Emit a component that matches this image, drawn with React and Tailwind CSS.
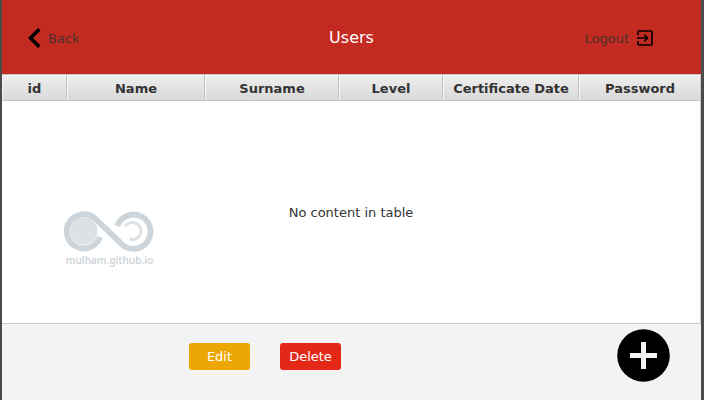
import React from "react";

const columns = [
  { label: "id", width: "w-[65px]" },
  { label: "Name", width: "w-[138px]" },
  { label: "Surname", width: "w-[134px]" },
  { label: "Level", width: "w-[104px]" },
  { label: "Certificate Date", width: "w-[136px]" },
  { label: "Password", width: "w-[122px]" },
];

function Watermark() {
  return (
    <div className="absolute left-[58px] top-[134px] flex w-[100px] flex-col items-center text-[#ced5da]">
      <svg width="100" height="46" viewBox="60 208 100 46" fill="none">
        <circle cx="83.8" cy="231" r="13.8" fill="#dce1e5" />
        <path d="M100 237A17.1 17.1 0 1 1 95.5 218.8L120.4 242.8A17.1 17.1 0 1 0 117.3 226" stroke="#ced5da" strokeWidth="5.8" />
        <path d="M125 226.5A8.6 8.6 0 1 1 129.5 239" stroke="#dce1e5" strokeWidth="2.8" />
      </svg>
      <span className="-ml-px -mt-[2px] font-['Noto_Sans',sans-serif] text-[10px] font-semibold leading-[16px]">mulham.github.io</span>
    </div>
  );
}

export default function App() {
  return (
    <div className="flex h-[400px] w-[704px] flex-col border-l-2 border-r-[3px] border-[#4b4b4b] bg-[#f3f3f3] font-['DejaVu_Sans',sans-serif] text-[13px] text-[#333]">
      <header className="grid h-[74px] shrink-0 grid-cols-3 items-center bg-[#c42b20] pb-[3px] pt-1">
        <button className="flex items-center gap-[7px] pl-[26px]">
          <svg width="13" height="20" viewBox="0 0 13 20" fill="none">
            <path d="M11.3 1.2L2.5 10L11.3 18.8" stroke="#000" strokeWidth="3.6" />
          </svg>
          <span className="pt-[2px] opacity-85">Back</span>
        </button>
        <h1 className="text-center text-base leading-5 text-white">Users</h1>
        <button className="flex items-center justify-end gap-[7px] pr-[47px]">
          <span className="pt-[2px] opacity-85">Logout</span>
          <svg width="18" height="18" viewBox="0 0 18 18" fill="none" stroke="#000" strokeWidth="1.6">
            <path d="M2 6V3Q2 2 3 2H15Q16 2 16 3V15Q16 16 15 16H3Q2 16 2 15V12M1 9H11.5M8.2 5.6L11.6 9L8.2 12.4" />
          </svg>
        </button>
      </header>

      <main className="relative flex h-[250px] shrink-0 flex-col border-b border-r border-[#c8c8c8] bg-white">
        <div className="flex h-[27px] shrink-0 border-y border-[#c4c4c4] bg-linear-to-b from-[#efefef] to-[#d9d9d9] font-bold">
          {columns.map((c) => (
            <div key={c.label} className={`${c.width} flex shrink-0 items-center justify-center border-r border-[#c2c2c2] pl-px pt-[2px] shadow-[inset_1px_1px_0_#f6f6f6] last:border-r-0 last:pl-0`}>
              {c.label}
            </div>
          ))}
        </div>
        <div className="flex flex-1 items-center justify-center pt-[2px]">No content in table</div>
        <Watermark />
      </main>

      <footer className="flex flex-1 items-start">
        <button className="ml-[187px] mt-[19px] h-[27px] w-[61px] rounded-[3px] bg-[#eda704] text-white">Edit</button>
        <button className="ml-[30px] mt-[19px] h-[27px] w-[61px] rounded-[3px] bg-[#e32818] text-white">Delete</button>
        <svg className="ml-auto mr-[31px] mt-[5px]" width="53" height="53" viewBox="0 0 53 53">
          <circle cx="26.5" cy="26.5" r="26.3" />
          <path d="M26.5 13V40M13 26.5H40" stroke="#f3f3f3" strokeWidth="5" />
        </svg>
      </footer>
    </div>
  );
}
